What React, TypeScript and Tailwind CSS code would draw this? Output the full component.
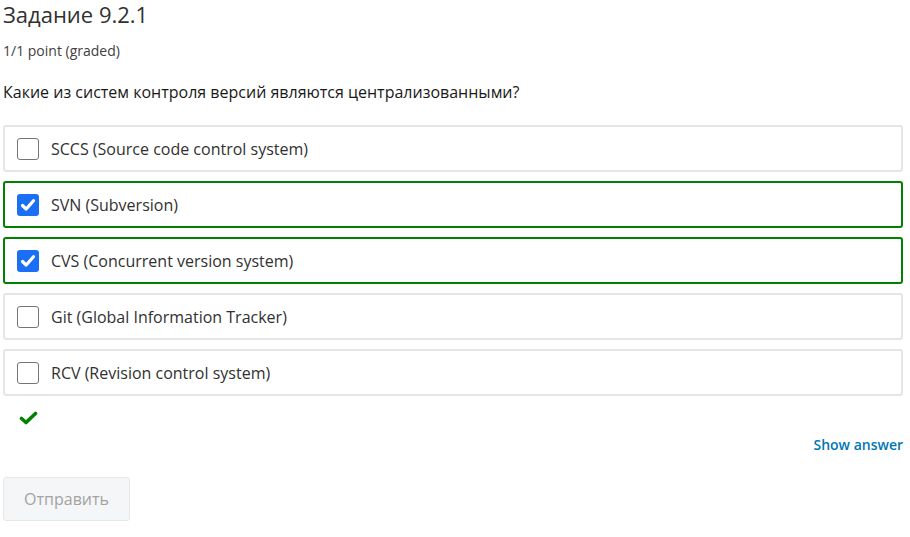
import React from "react";

const options = [
  { label: "SCCS (Source code control system)", checked: false },
  { label: "SVN (Subversion)", checked: true },
  { label: "CVS (Concurrent version system)", checked: true },
  { label: "Git (Global Information Tracker)", checked: false },
  { label: "RCV (Revision control system)", checked: false },
];

function Box({ checked }: { checked: boolean }) {
  if (checked) {
    return (
      <span className="flex h-[22px] w-[22px] shrink-0 items-center justify-center rounded-[3px] bg-[#1b6ff5]">
        <svg width="16" height="16" viewBox="0 0 16 16">
          <path d="M2.5 8.5 L6.2 12 L13.5 3.8" fill="none" stroke="#fff" strokeWidth="3.2" strokeLinecap="round" strokeLinejoin="round" />
        </svg>
      </span>
    );
  }
  return <span className="h-[22px] w-[22px] shrink-0 rounded-[3px] border border-[#767676] bg-white" />;
}

export default function App() {
  return (
    <div className="min-h-[537px] w-[910px] bg-white pl-[3px] pr-[7px] text-[#313131]" style={{ fontFamily: '"Open Sans", sans-serif' }}>
      <h2 className="text-[22px] leading-[28px] text-[#313131]">Задание 9.2.1</h2>
      <div className="mt-[14px] text-[14px] leading-[18px] text-[#414141]">1/1 point (graded)</div>
      <p className="mt-[21px] text-[16px] leading-[22px] text-[#191919]">Какие из систем контроля версий являются централизованными?</p>
      <div className="mt-[22px] flex flex-col gap-[9px]">
        {options.map((o) => (
          <label
            key={o.label}
            className={`flex h-[47px] items-center gap-[12px] rounded-[3px] border-2 px-[12px] text-[16px] ${
              o.checked ? "border-[#008100]" : "border-[#e5e5e5]"
            }`}
          >
            <Box checked={o.checked} />
            <span className="text-[#313131]">{o.label}</span>
          </label>
        ))}
      </div>
      <div className="mt-[14px] pl-[16px]">
        <svg width="20" height="16" viewBox="0 0 20 16">
          <path d="M2.5 8.5 L7 12.5 L16.5 3.5" fill="none" stroke="#008100" strokeWidth="3.6" strokeLinecap="round" strokeLinejoin="round" />
        </svg>
      </div>
      <div className="mt-[9px] flex justify-end">
        <span className="text-[14px] font-semibold leading-[20px] text-[#0075b4]">Show answer</span>
      </div>
      <button className="mt-[22px] h-[44px] w-[127px] rounded-[3px] border border-[#e7e7e7] bg-[#f5f6f7] text-[16px] text-[#a3a3a3]">
        Отправить
      </button>
    </div>
  );
}
